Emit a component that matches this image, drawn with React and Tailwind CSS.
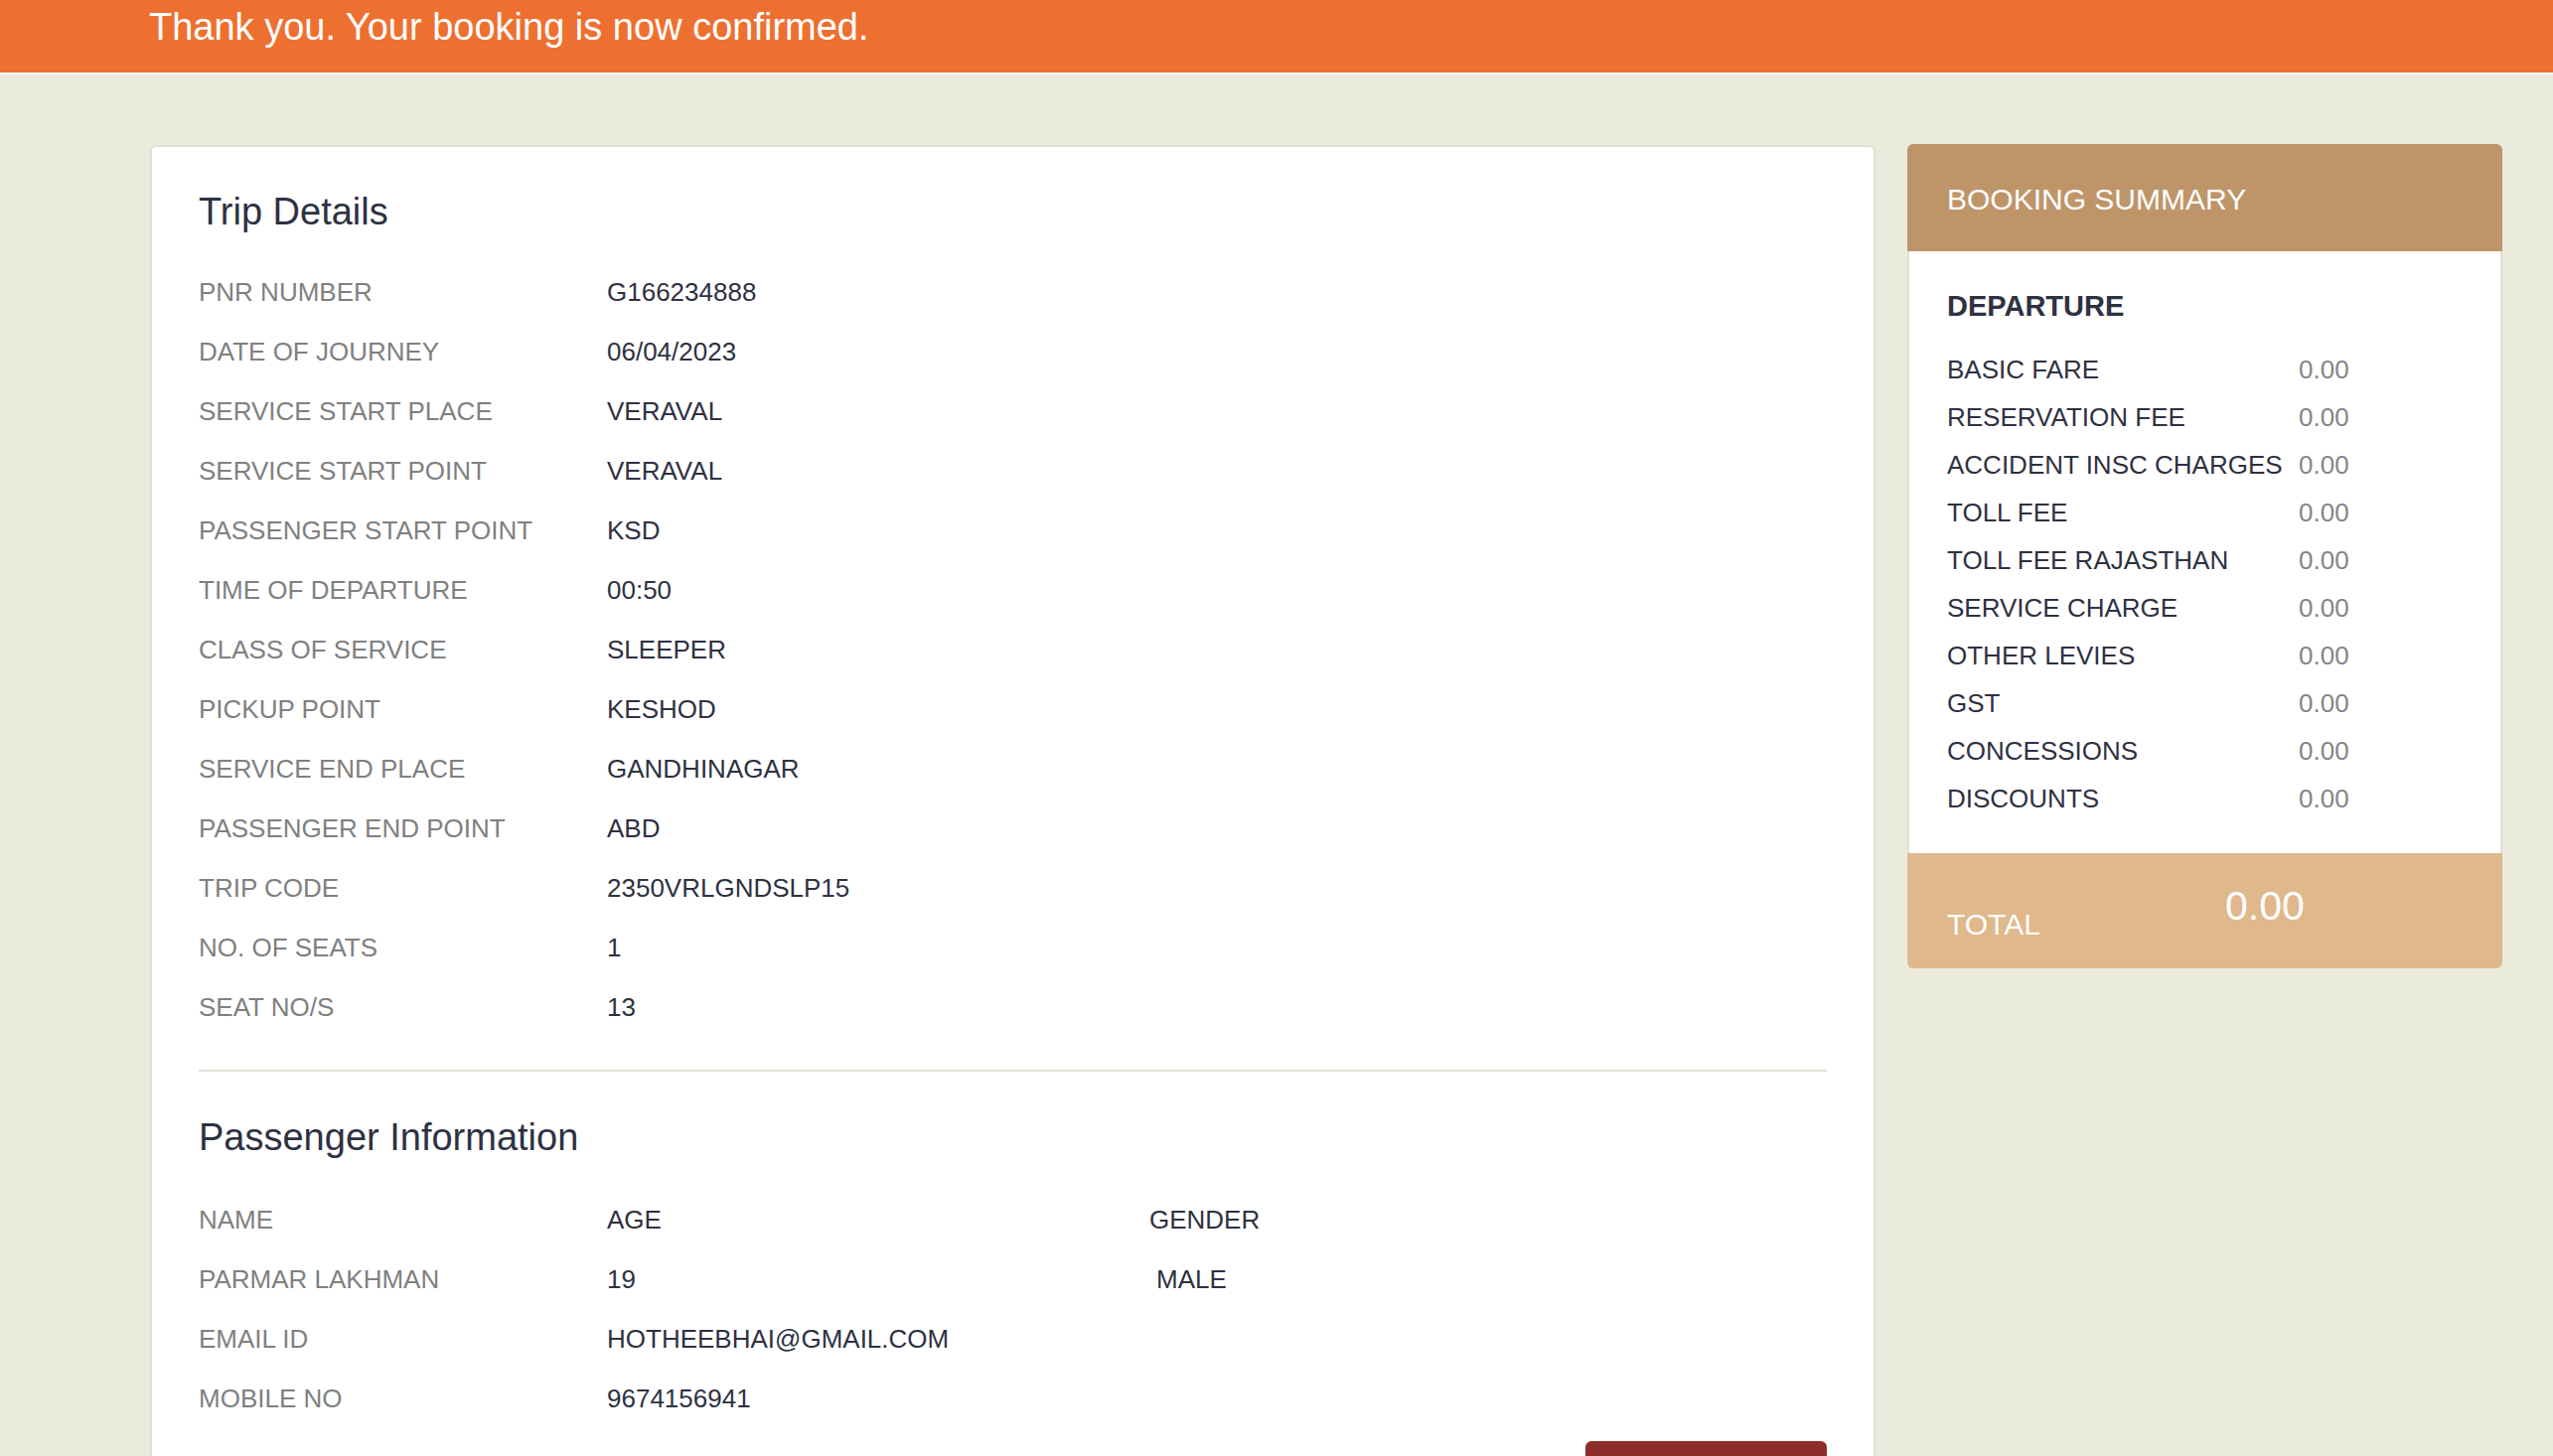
import React from "react";

const trip = [
  ["PNR NUMBER", "G166234888"],
  ["DATE OF JOURNEY", "06/04/2023"],
  ["SERVICE START PLACE", "VERAVAL"],
  ["SERVICE START POINT", "VERAVAL"],
  ["PASSENGER START POINT", "KSD"],
  ["TIME OF DEPARTURE", "00:50"],
  ["CLASS OF SERVICE", "SLEEPER"],
  ["PICKUP POINT", "KESHOD"],
  ["SERVICE END PLACE", "GANDHINAGAR"],
  ["PASSENGER END POINT", "ABD"],
  ["TRIP CODE", "2350VRLGNDSLP15"],
  ["NO. OF SEATS", "1"],
  ["SEAT NO/S", "13"],
];

const fares = [
  "BASIC FARE",
  "RESERVATION FEE",
  "ACCIDENT INSC CHARGES",
  "TOLL FEE",
  "TOLL FEE RAJASTHAN",
  "SERVICE CHARGE",
  "OTHER LEVIES",
  "GST",
  "CONCESSIONS",
  "DISCOUNTS",
];

function Row({ label, value }) {
  return (
    <div className="flex h-[60px] items-center text-[26px] leading-[60px]">
      <div className="w-[411px] text-[#808080]">{label}</div>
      <div className="text-[#2e3142]">{value}</div>
    </div>
  );
}

export default function App() {
  return (
    <div
      className="min-h-screen bg-[#ebebdd]"
      style={{ fontFamily: '"Liberation Sans", Arial, Helvetica, sans-serif' }}
    >
      <div className="h-[75px] border-b-2 border-white bg-[#ed7031] pl-[150px] pt-[7px] text-[38px] leading-[40px] text-white">
        Thank you. Your booking is now confirmed.
      </div>

      <div className="flex items-start gap-[32px] pl-[151px] pt-[71px]">
        <div className="w-[1737px] rounded-[6px] border-2 border-[#e0e0d3] bg-white px-[47px] pt-[42px]">
          <h2 className="text-[38px] leading-[46px] text-[#2e3142]">Trip Details</h2>
          <div className="mt-[28px]">
            {trip.map(([l, v]) => (
              <Row key={l} label={l} value={v} />
            ))}
          </div>
          <div className="mt-[33px] h-[2px] bg-[#e1e1d5]" />
          <h2 className="mt-[43px] text-[38px] leading-[46px] text-[#2e3142]">
            Passenger Information
          </h2>
          <div className="mt-[30px] text-[26px] leading-[60px]">
            <div className="flex h-[60px]">
              <div className="w-[411px] text-[#808080]">NAME</div>
              <div className="w-[546px] text-[#2e3142]">AGE</div>
              <div className="text-[#2e3142]">GENDER</div>
            </div>
            <div className="flex h-[60px]">
              <div className="w-[411px] text-[#808080]">PARMAR LAKHMAN</div>
              <div className="w-[546px] text-[#2e3142]">19</div>
              <div className="pl-[7px] text-[#2e3142]">MALE</div>
            </div>
            <div className="flex h-[60px]">
              <div className="w-[411px] text-[#808080]">EMAIL ID</div>
              <div className="text-[#2e3142]">HOTHEEBHAI@GMAIL.COM</div>
            </div>
            <div className="flex h-[60px]">
              <div className="w-[411px] text-[#808080]">MOBILE NO</div>
              <div className="text-[#2e3142]">9674156941</div>
            </div>
          </div>
          <div className="mt-[13px] flex justify-end pb-[40px]">
            <div className="h-[64px] w-[243px] rounded-[6px] bg-[#8e2e2a]" />
          </div>
        </div>

        <div className="-mt-px w-[599px]">
          <div className="h-[108px] rounded-t-[6px] bg-[#be9569] pl-[40px] pt-[39px] text-[30px] leading-[34px] text-white">
            BOOKING SUMMARY
          </div>
          <div className="border-x-2 border-[#e0e0d3] bg-white pb-[31px] pl-[38px] pt-[38px]">
            <div className="text-[29px] font-bold leading-[34px] text-[#2e3142]">DEPARTURE</div>
            <div className="mt-[23px]">
              {fares.map((f) => (
                <div key={f} className="flex h-[48px] text-[26px] leading-[48px]">
                  <div className="w-[354px] text-[#2e3142]">{f}</div>
                  <div className="text-[#858585]">0.00</div>
                </div>
              ))}
            </div>
          </div>
          <div className="flex h-[116px] rounded-b-[6px] bg-[#dfb98c] pl-[40px] text-white">
            <div className="w-[280px] pt-[55px] text-[30px] leading-[34px]">TOTAL</div>
            <div className="pt-[30px] text-[41px] leading-[46px]">0.00</div>
          </div>
        </div>
      </div>
    </div>
  );
}
